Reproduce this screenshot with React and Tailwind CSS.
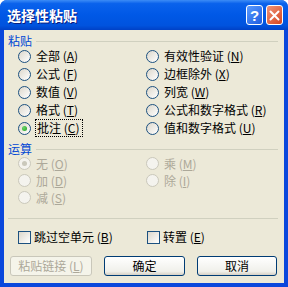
import React from "react";

function Radio({ label, mn, checked, disabled, focus }) {
  return (
    <div className="flex items-center h-full">
      <span
        className={
          "relative w-[13px] h-[13px] rounded-full border flex items-center justify-center shrink-0 " +
          (disabled
            ? "border-[#CAC8BB] bg-[#F4F3EE]"
            : "border-[#1C5180] bg-[linear-gradient(135deg,#DCD7CB,#FFFFFF)]")
        }
      >
        {checked && (
          <span
            className={
              "w-[5px] h-[5px] rounded-full " +
              (disabled ? "bg-[#CAC8BB]" : "bg-[radial-gradient(circle_at_35%_35%,#6BD36B,#21A121)]")
            }
          />
        )}
      </span>
      <span
        className={
          "ml-[4px] text-[12px] leading-[14px] whitespace-nowrap " +
          (disabled ? "text-[#ACA899]" : "text-black") +
          (focus ? " border border-dotted border-black py-px -my-px -ml-[1px] pl-[1px] pr-[3px]" : " px-[1px]")
        }
      >
        {label} (<u>{mn}</u>)
      </span>
    </div>
  );
}

function Check({ label, mn }) {
  return (
    <div className="flex items-center h-full">
      <span className="w-[13px] h-[13px] border border-[#1C5180] bg-[linear-gradient(135deg,#DCD7CB,#FFFFFF)] shrink-0" />
      <span className="ml-[3px] text-[12px] leading-[14px] whitespace-nowrap">
        {label} (<u>{mn}</u>)
      </span>
    </div>
  );
}

function GroupLabel({ text }) {
  return (
    <div className="h-[12px] flex items-center">
      <span className="text-[12px] leading-[12px] text-[#0046D5]">{text}</span>
      <span className="flex-1 h-px bg-[#D0D0BF] ml-[4px] mr-[2px]" />
    </div>
  );
}

function Button({ children, disabled, className }) {
  return (
    <div
      className={
        "h-[20px] rounded-[3px] border flex items-center justify-center text-[12px] leading-[14px] " +
        (disabled
          ? "border-[#C9C7BA] text-[#ACA899] bg-[#F5F4EA]"
          : "border-[#003C74] text-black bg-[linear-gradient(to_bottom,#FFFFFF,#F0F0EA_80%,#D6D0C5)]") +
        " " +
        className
      }
    >
      {children}
    </div>
  );
}

export default function App() {
  return (
    <div className="w-[288px] h-[287px] flex flex-col rounded-t-[7px] overflow-hidden bg-[#0A47DC] font-['Noto_Sans_CJK_SC',sans-serif]">
      <div className="h-[30px] shrink-0 flex items-center pl-[7px] pr-[5px] bg-[linear-gradient(to_bottom,#3C8CF6_0%,#0A62EC_12%,#0058E6_50%,#0053DE_85%,#0041C6_100%)]">
        <span className="text-white font-bold text-[14px] leading-[16px] [text-shadow:1px_1px_0_#0A1E80]">
          选择性粘贴
        </span>
        <div className="flex-1" />
        <div className="w-[17px] h-[20px] rounded-[3px] border border-white bg-[linear-gradient(135deg,#5A9BFF,#1D5CE0)] flex items-center justify-center text-white font-bold text-[15px] leading-none font-['Liberation_Sans',sans-serif]">
          ?
        </div>
        <div className="ml-[3px] w-[17px] h-[20px] rounded-[3px] border border-white bg-[linear-gradient(135deg,#F09478,#D5451F)] flex items-center justify-center">
          <svg width="11" height="11" viewBox="0 0 11 11">
            <path d="M1.5 1.5 L9.5 9.5 M9.5 1.5 L1.5 9.5" stroke="white" strokeWidth="2" strokeLinecap="round" />
          </svg>
        </div>
      </div>
      <div className="flex-1 mx-[4px] mb-[4px] bg-[#ECE9D8] pt-[5px] px-[4px] flex flex-col">
        <GroupLabel text="粘贴" />
        <div className="grid grid-cols-[128px_1fr] auto-rows-[18px] pl-[10px]">
          <Radio label="全部" mn="A" />
          <Radio label="有效性验证" mn="N" />
          <Radio label="公式" mn="F" />
          <Radio label="边框除外" mn="X" />
          <Radio label="数值" mn="V" />
          <Radio label="列宽" mn="W" />
          <Radio label="格式" mn="T" />
          <Radio label="公式和数字格式" mn="R" />
          <Radio label="批注" mn="C" checked focus />
          <Radio label="值和数字格式" mn="U" />
        </div>
        <div className="mt-[6px]">
          <GroupLabel text="运算" />
        </div>
        <div className="grid grid-cols-[128px_1fr] auto-rows-[17px] pl-[10px]">
          <Radio label="无" mn="O" checked disabled />
          <Radio label="乘" mn="M" disabled />
          <Radio label="加" mn="D" disabled />
          <Radio label="除" mn="I" disabled />
          <Radio label="减" mn="S" disabled />
        </div>
        <div className="mt-[12px] h-px bg-[#D0D0BF] mr-[2px]" />
        <div className="mt-[11px] h-[13px] grid grid-cols-[129px_1fr] pl-[10px]">
          <Check label="跳过空单元" mn="B" />
          <Check label="转置" mn="E" />
        </div>
        <div className="mt-[13px] flex pl-[2px]">
          <Button disabled className="w-[82px]">
            粘贴链接 (<u>L</u>)
          </Button>
          <Button className="w-[81px] ml-[12px]">确定</Button>
          <Button className="w-[80px] ml-[12px]">取消</Button>
        </div>
      </div>
    </div>
  );
}
